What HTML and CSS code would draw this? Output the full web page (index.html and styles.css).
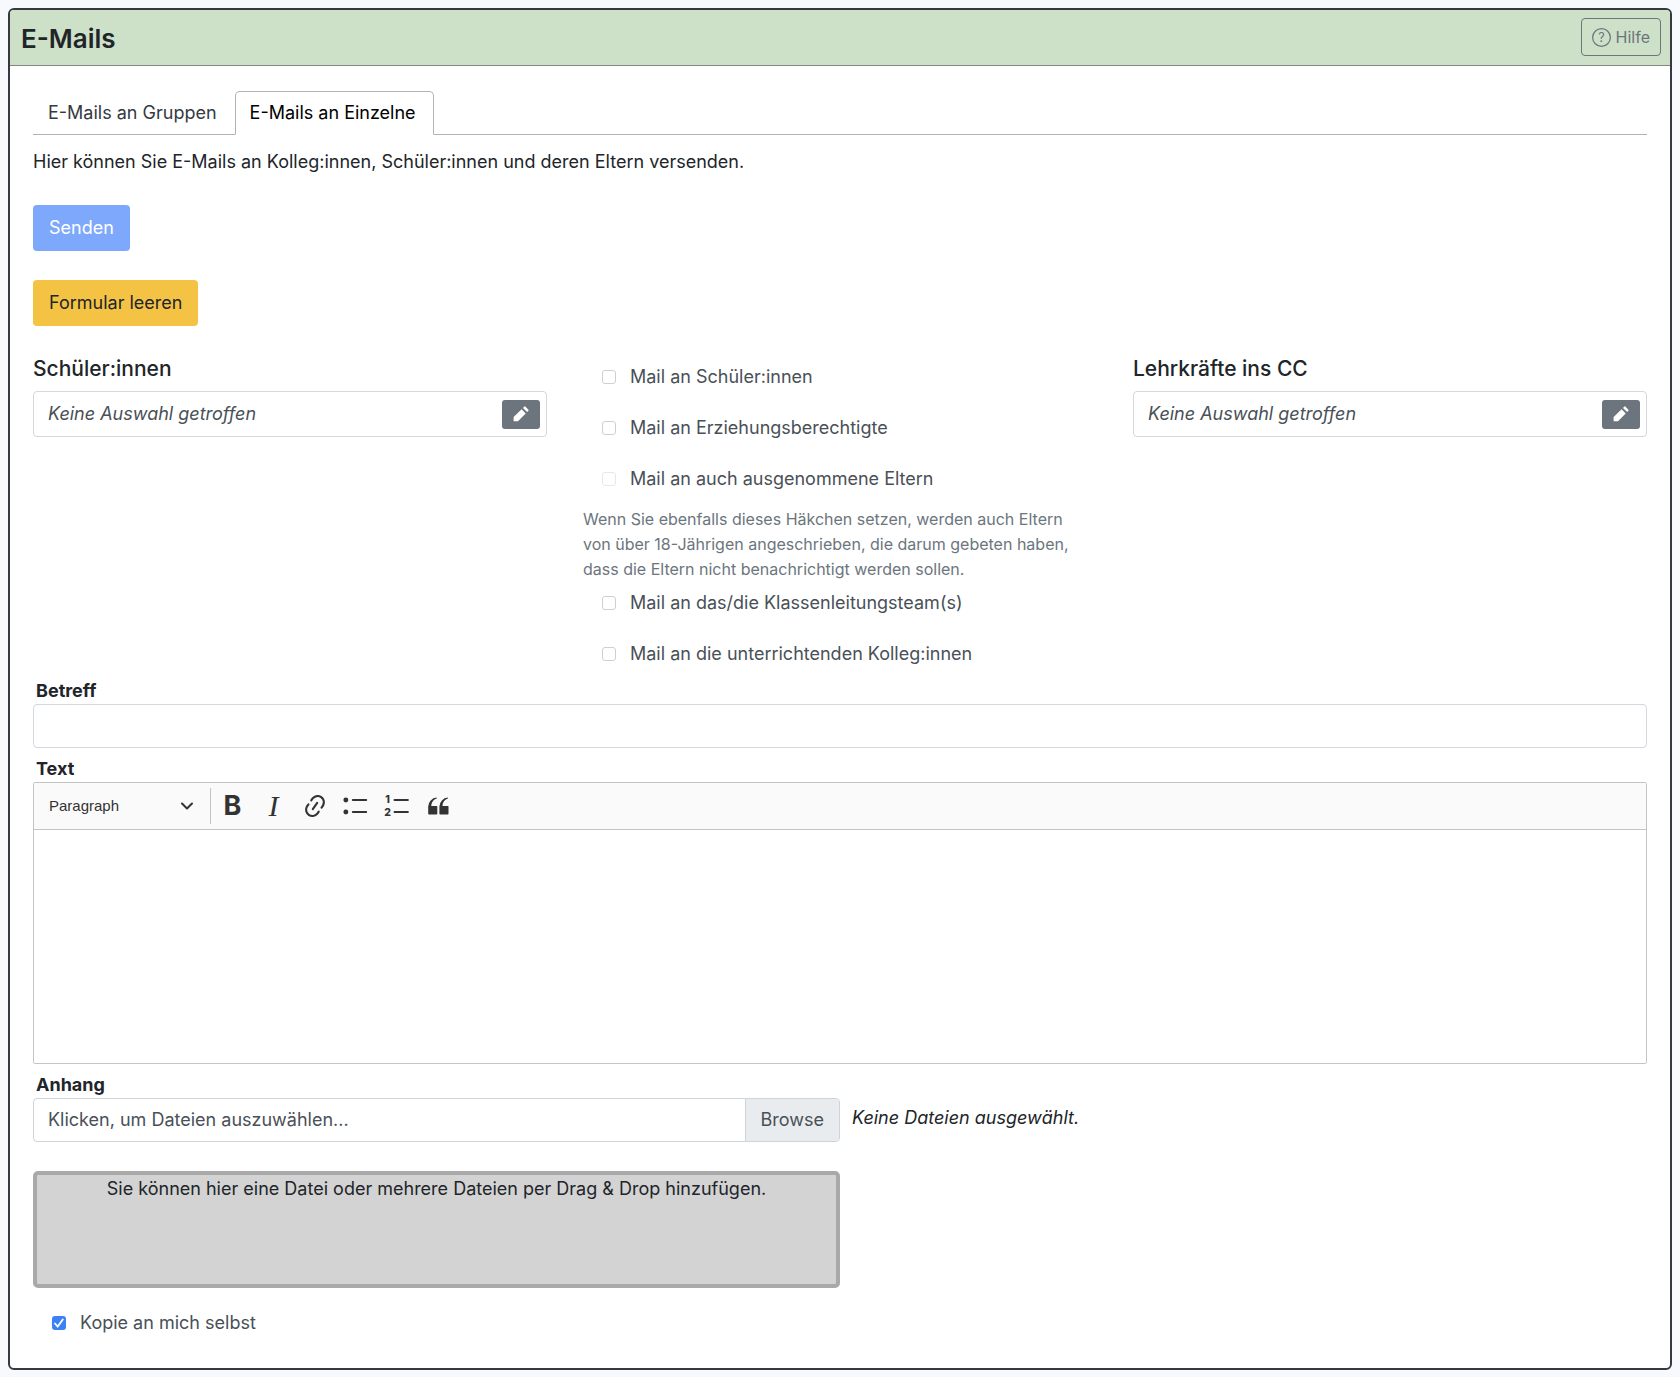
FILE: index.html
```html
<!DOCTYPE html>
<html lang="de">
<head>
<meta charset="utf-8">
<meta name="viewport" content="width=device-width, initial-scale=1">
<title>E-Mails</title>
<link rel="stylesheet" href="styles.css">
</head>
<body>
<main class="card">
  <header class="card-header">
    <h1>E-Mails</h1>
    <button type="button" class="btn-help">
      <svg class="help-icon" viewBox="0 0 18 18" aria-hidden="true"><circle cx="9" cy="9" r="8.4" fill="none" stroke="currentColor" stroke-width="1.2"/><text x="9" y="13.4" text-anchor="middle" font-size="12" fill="currentColor">?</text></svg>
      Hilfe
    </button>
  </header>
  <form class="card-body">
    <nav class="tabs">
      <a class="tab" href="#gruppen">E-Mails an Gruppen</a>
      <a class="tab active" href="#einzelne" aria-current="page">E-Mails an Einzelne</a>
    </nav>
    <p class="intro">Hier können Sie E-Mails an Kolleg:innen, Schüler:innen und deren Eltern versenden.</p>
    <div class="actions">
      <button type="submit" class="btn btn-primary" disabled>Senden</button>
      <button type="reset" class="btn btn-warning">Formular leeren</button>
    </div>

    <div class="recipients">
      <section>
        <h2>Schüler:innen</h2>
        <div class="picker">
          <span>Keine Auswahl getroffen</span>
          <button type="button" class="btn-edit" aria-label="Schüler:innen auswählen">
            <svg viewBox="0 0 16 16" aria-hidden="true"><path d="M12.3.6l3.100 3.100a.7.7 0 0 1 0 1l-1.300 1.300L10 1.900l1.300-1.300a.7.7 0 0 1 1 0zM8.600 3.300l4.100 4.100L5.200 15a1 1 0 0 1-.6.300H1.200a.6.6 0 0 1-.6-.6v-3.400a1 1 0 0 1 .300-.600z"/></svg>
          </button>
        </div>
      </section>
      <section class="options">
        <div class="check"><input type="checkbox" id="c1"><label for="c1">Mail an Schüler:innen</label></div>
        <div class="check"><input type="checkbox" id="c2"><label for="c2">Mail an Erziehungsberechtigte</label></div>
        <div class="check"><input type="checkbox" id="c3" disabled><label for="c3">Mail an auch ausgenommene Eltern</label></div>
        <small class="hint">Wenn Sie ebenfalls dieses Häkchen setzen, werden auch Eltern von über 18-Jährigen angeschrieben, die darum gebeten haben, dass die Eltern nicht benachrichtigt werden sollen.</small>
        <div class="check"><input type="checkbox" id="c4"><label for="c4">Mail an das/die Klassenleitungsteam(s)</label></div>
        <div class="check"><input type="checkbox" id="c5"><label for="c5">Mail an die unterrichtenden Kolleg:innen</label></div>
      </section>
      <section>
        <h2>Lehrkräfte ins CC</h2>
        <div class="picker">
          <span>Keine Auswahl getroffen</span>
          <button type="button" class="btn-edit" aria-label="Lehrkräfte auswählen">
            <svg viewBox="0 0 16 16" aria-hidden="true"><path d="M12.3.6l3.100 3.100a.7.7 0 0 1 0 1l-1.300 1.300L10 1.900l1.300-1.300a.7.7 0 0 1 1 0zM8.600 3.300l4.100 4.100L5.200 15a1 1 0 0 1-.6.300H1.200a.6.6 0 0 1-.6-.6v-3.400a1 1 0 0 1 .300-.600z"/></svg>
          </button>
        </div>
      </section>
    </div>

    <label class="field-label" for="subject">Betreff</label>
    <input class="text-input" type="text" id="subject">

    <label class="field-label field-label-spaced" for="message">Text</label>
    <div class="editor">
      <div class="toolbar">
        <div class="style-select">
          <select aria-label="Absatzformat"><option>Paragraph</option></select>
          <svg viewBox="0 0 14 14" aria-hidden="true"><path d="M2 4.500l5 5 5-5" fill="none" stroke="currentColor" stroke-width="2" stroke-linecap="round" stroke-linejoin="round"/></svg>
        </div>
        <span class="separator"></span>
        <button type="button" class="tool tool-bold" aria-label="Fett">B</button>
        <button type="button" class="tool tool-italic" aria-label="Kursiv">I</button>
        <button type="button" class="tool" aria-label="Link"><svg viewBox="0 0 20 20"><path d="m11.077 15 .991-1.416a.75.75 0 1 1 1.229.86l-1.148 1.64a.748.748 0 0 1-.217.206 5.251 5.251 0 0 1-8.503-5.955.741.741 0 0 1 .12-.274l1.147-1.639a.75.75 0 1 1 1.228.86L4.933 10.7l.006.003a3.75 3.75 0 0 0 6.132 4.294l.006.004zm5.494-5.335a.748.748 0 0 1-.12.274l-1.147 1.639a.75.75 0 1 1-1.228-.86l.86-1.23a3.75 3.75 0 0 0-6.144-4.301l-.86 1.229a.75.75 0 0 1-1.229-.86l1.148-1.64a.748.748 0 0 1 .217-.206 5.251 5.251 0 0 1 8.503 5.955zm-4.563-2.532a.75.75 0 0 1 .184 1.045l-3.155 4.505a.75.75 0 1 1-1.229-.86l3.155-4.506a.75.75 0 0 1 1.045-.184z"/></svg></button>
        <button type="button" class="tool" aria-label="Aufzählung"><svg viewBox="0 0 20 20"><circle cx="2.750" cy="5.750" r="1.750"/><circle cx="2.750" cy="14.250" r="1.750"/><path d="M7.750 5.750h9.500M7.750 14.250h9.500" stroke="currentColor" stroke-width="1.500" stroke-linecap="round"/></svg></button>
        <button type="button" class="tool" aria-label="Nummerierte Liste"><svg viewBox="0 0 20 20"><text x="3.200" y="8" text-anchor="middle" font-size="7.500" font-weight="800">1</text><text x="3.200" y="17.300" text-anchor="middle" font-size="7.500" font-weight="800">2</text><path d="M8.250 5.750h9.500M8.250 14.250h9.500" stroke="currentColor" stroke-width="1.500" stroke-linecap="round"/></svg></button>
        <button type="button" class="tool" aria-label="Zitat"><svg viewBox="0 0 20 20"><path d="M3 10.423a6.5 6.5 0 0 1 6.056-6.408l.038.67C6.448 5.423 5.354 7.663 5.22 10H9c.552 0 .5.432.5.986v4.511c0 .554-.448.503-1 .503h-5c-.552 0-.5-.449-.5-1.003v-4.574zm8 0a6.5 6.5 0 0 1 6.056-6.408l.038.67c-2.646.739-3.74 2.979-3.873 5.315H17c.552 0 .5.432.5.986v4.511c0 .554-.448.503-1 .503h-5c-.552 0-.5-.449-.5-1.003v-4.574z"/></svg></button>
      </div>
      <textarea id="message"></textarea>
    </div>

    <label class="field-label field-label-spaced" for="files">Anhang</label>
    <div class="attachments">
      <div class="upload">
        <div class="file">
          <span class="file-name">Klicken, um Dateien auszuwählen...</span>
          <span class="file-browse">Browse</span>
          <input type="file" id="files" multiple>
        </div>
        <div class="dropzone">Sie können hier eine Datei oder mehrere Dateien per Drag &amp; Drop hinzufügen.</div>
      </div>
      <em class="file-status">Keine Dateien ausgewählt.</em>
    </div>
    <div class="check check-copy"><input type="checkbox" id="copy" checked><label for="copy">Kopie an mich selbst</label></div>
  </form>
</main>
</body>
</html>
```
FILE: styles.css
```css
* { box-sizing: border-box; }

body {
  margin: 0;
  padding: 8px;
  background: #f8f9fc;
  color: #212529;
  font-family: Inter, "Liberation Sans", sans-serif;
  font-size: 18px;
  line-height: 28px;
}

button, input, select, textarea { font: inherit; color: inherit; }
h1, h2, p { margin: 0; font-weight: 500; }

.card {
  border: 2px solid #343a40;
  border-radius: 6px;
  background: #fff;
  overflow: hidden;
}

.card-header {
  display: flex;
  justify-content: space-between;
  align-items: flex-start;
  padding: 8px 9px 9px 11px;
  background: #cde1c8;
  border-bottom: 1px solid #7f8a7d;
}
.card-header h1 { padding-top: 4px; font-size: 26px; font-weight: 600; line-height: 34px; }

.btn-help {
  display: flex;
  align-items: center;
  gap: 5px;
  height: 38px;
  padding: 0 10px;
  border: 1px solid #6c757d;
  border-radius: 4px;
  background: none;
  color: #6c757d;
  font-size: 16px;
}
.help-icon { width: 19px; height: 19px; }

.card-body { padding: 25px 23px 20px; }

.tabs { display: flex; border-bottom: 1px solid #b3b3b3; }
.tab {
  margin-bottom: -1px;
  padding: 7px 17px 7px 14px;
  border: 1px solid transparent;
  border-radius: 5px 5px 0 0;
  color: #343a40;
  line-height: 28px;
  text-decoration: none;
}
.tab.active {
  border-color: #b3b3b3 #b3b3b3 #fff;
  background: #fff;
  color: #000;
}

.intro { margin-top: 13px; font-weight: 400; }

.actions {
  display: flex;
  flex-direction: column;
  align-items: flex-start;
  gap: 29px;
  margin-top: 29px;
}
.btn {
  height: 46px;
  padding: 0 16px;
  border: 0;
  border-radius: 4px;
}
.btn-primary { background: #7ea8fb; color: #fff; }
.btn-warning { background: #f5c344; color: #212529; }

.recipients {
  display: grid;
  grid-template-columns: repeat(3, 1fr);
  gap: 36px;
  margin-top: 29px;
}
.recipients h2 { margin-bottom: 8px; font-size: 21px; line-height: 28px; }
.picker {
  display: flex;
  align-items: center;
  justify-content: space-between;
  height: 46px;
  padding: 0 6px 0 14px;
  border: 1px solid #d3d8de;
  border-radius: 4px;
  color: #495057;
  font-style: italic;
}
.btn-edit {
  display: flex;
  align-items: center;
  justify-content: center;
  width: 38px;
  height: 29px;
  padding: 0;
  border: 0;
  border-radius: 3px;
  background: #6c757d;
  color: #fff;
}
.btn-edit svg { width: 16px; height: 16px; fill: currentColor; }

.check {
  display: flex;
  align-items: center;
  gap: 14px;
  height: 51px;
  padding-left: 19px;
  color: #495057;
}
.check input {
  appearance: none;
  width: 14px;
  height: 14px;
  margin: 0;
  border: 1px solid #cfcfcf;
  border-radius: 3px;
  background: #fff;
}
.check input:disabled { border-color: #e8e8e8; }
.check input:checked {
  border: 0;
  background: #3b82f6 url("data:image/svg+xml,%3Csvg xmlns='http://www.w3.org/2000/svg' viewBox='0 0 14 14'%3E%3Cpath d='M3 7.500l2.700 3L10.800 3.500' fill='none' stroke='white' stroke-width='1.800' stroke-linecap='round'/%3E%3C/svg%3E");
}
.options { margin: -4px 0 -1px; }
.hint {
  display: block;
  margin: 3px 0 -5px;
  padding-right: 8px;
  color: #6c757d;
  font-size: 16px;
  line-height: 25px;
}

.field-label {
  display: block;
  width: fit-content;
  padding-left: 3px;
  font-weight: 700;
  line-height: 26px;
}
.field-label-spaced { margin-top: 8px; }
.text-input {
  display: block;
  width: 100%;
  height: 44px;
  padding: 0 14px;
  border: 1px solid #d3d8de;
  border-radius: 4px;
}

.editor { border: 1px solid #c4c4c4; border-radius: 2px; }
.toolbar {
  display: flex;
  align-items: center;
  height: 47px;
  padding-left: 15px;
  border-bottom: 1px solid #c4c4c4;
  background: #fafafa;
  color: #333;
}
.style-select {
  display: grid;
  align-items: center;
  width: 161px;
  font-family: "Liberation Sans", sans-serif;
  font-size: 15px;
}
.style-select > * { grid-area: 1 / 1; }
.style-select select {
  width: 100%;
  height: 38px;
  padding: 0;
  border: 0;
  background: none;
  appearance: none;
}
.style-select svg { width: 14px; height: 14px; margin-right: 16px; justify-self: end; pointer-events: none; }
.separator { width: 1px; height: 36px; margin-right: 1px; background: #c4c4c4; }
.tool {
  display: flex;
  align-items: center;
  justify-content: center;
  width: 41px;
  height: 40px;
  padding: 0;
  border: 0;
  background: none;
}
.tool svg { width: 28px; height: 28px; fill: currentColor; }
.tool-bold { font-size: 27px; font-weight: 700; }
.tool-italic { font-family: "Liberation Serif", serif; font-size: 30px; font-style: italic; }
.editor textarea {
  display: block;
  width: 100%;
  height: 233px;
  padding: 12px 14px;
  border: 0;
  background: #fff;
  resize: none;
}

.attachments {
  display: grid;
  grid-template-columns: 1fr 1fr;
}
.file {
  display: flex;
  position: relative;
  height: 44px;
  border: 1px solid #ced4da;
  border-radius: 4px;
  color: #495057;
  line-height: 42px;
  overflow: hidden;
}
.file-name { flex: 1; padding-left: 14px; }
.file-browse { padding: 0 15px; border-left: 1px solid #ced4da; background: #e9ecef; }
.file input { position: absolute; inset: 0; opacity: 0; }
.dropzone {
  min-height: 117px;
  margin-top: 29px;
  border: 4px solid #a9a9a9;
  border-radius: 5px;
  background: #d3d3d3;
  text-align: center;
}
.file-status { padding: 6px 0 0 12px; }
.check-copy { margin-top: 9px; }
```
